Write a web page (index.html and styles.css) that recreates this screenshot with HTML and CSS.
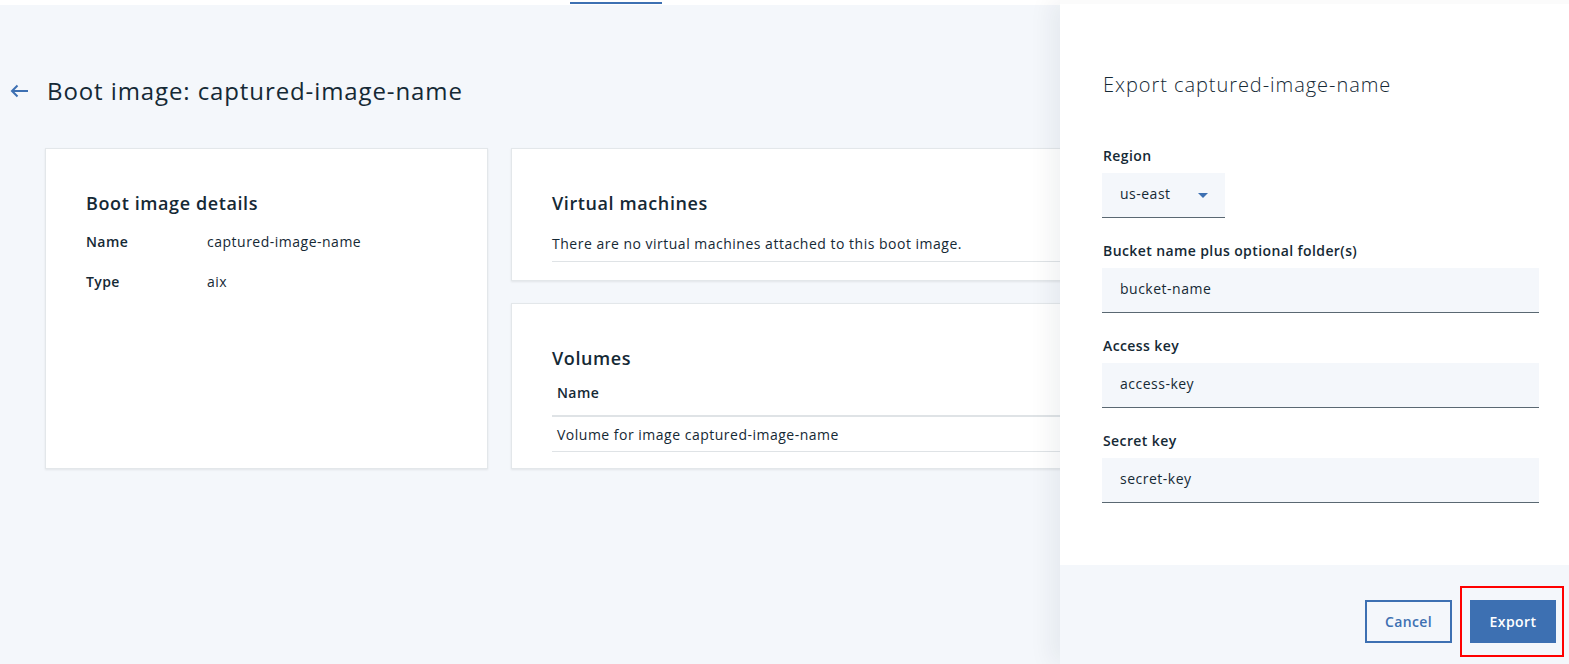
FILE: index.html
```html
<!DOCTYPE html>
<html lang="en">
<head>
<meta charset="utf-8">
<title>Boot image</title>
<link rel="stylesheet" href="styles.css">
</head>
<body>
<div class="topstrip"><span class="tabbar"></span></div>
<main class="page">
  <header class="pagehead">
    <svg class="back" width="20" height="16" viewBox="0 0 20 16" aria-hidden="true">
      <path d="M19 8H3M8.5 2.5L3 8l5.5 5.5" fill="none" stroke="#3d70b2" stroke-width="2"/>
    </svg>
    <h1 class="title">Boot image: captured-image-name</h1>
  </header>
  <section class="cards">
    <div class="card card-details">
      <h2 class="card-title">Boot image details</h2>
      <dl class="props">
        <div class="prop"><dt>Name</dt><dd>captured-image-name</dd></div>
        <div class="prop"><dt>Type</dt><dd>aix</dd></div>
      </dl>
    </div>
    <div class="col">
      <div class="card card-vm">
        <h2 class="card-title">Virtual machines</h2>
        <p class="empty">There are no virtual machines attached to this boot image.</p>
      </div>
      <div class="card card-vol">
        <h2 class="card-title">Volumes</h2>
        <div class="table">
          <div class="th">Name</div>
          <div class="td">Volume for image captured-image-name</div>
        </div>
      </div>
    </div>
  </section>
</main>
<aside class="panel">
  <div class="panel-body">
    <h3 class="panel-title">Export captured-image-name</h3>
    <div class="field">
      <label class="label">Region</label>
      <div class="select">
        <span>us-east</span>
        <svg width="10" height="5" viewBox="0 0 10 5" aria-hidden="true"><path d="M0 0h10L5 5z" fill="#3d70b2"/></svg>
      </div>
    </div>
    <div class="field">
      <label class="label">Bucket name plus optional folder(s)</label>
      <div class="input">bucket-name</div>
    </div>
    <div class="field">
      <label class="label">Access key</label>
      <div class="input">access-key</div>
    </div>
    <div class="field">
      <label class="label">Secret key</label>
      <div class="input">secret-key</div>
    </div>
  </div>
  <footer class="panel-foot">
    <button class="btn btn-secondary">Cancel</button>
    <button class="btn btn-primary">Export</button>
    <span class="highlight"></span>
  </footer>
</aside>
</body>
</html>
```
FILE: styles.css
```css
* { box-sizing: border-box; }
html, body { margin: 0; padding: 0; }
body {
  width: 1569px;
  height: 664px;
  overflow: hidden;
  background: #f4f7fb;
  font-family: "Open Sans", "Noto Sans", sans-serif;
  color: #152935;
  position: relative;
  letter-spacing: 0.5px;
}
.topstrip {
  height: 5px;
  background: #ffffff;
  position: relative;
}
.tabbar {
  position: absolute;
  left: 570px;
  top: 2px;
  width: 92px;
  height: 2px;
  background: #3d70b2;
}
.page {
  padding: 0 45px;
}
.pagehead {
  display: flex;
  align-items: center;
  height: 174px;
  margin-left: -36px;
  padding-bottom: 32px;
  padding-top: 30px;
  gap: 18px;
}
.back { flex: none; }
.title {
  margin: 0;
  font-size: 24px;
  font-weight: 400;
  line-height: 30px;
  color: #152935;
  letter-spacing: 0.9px;
}
.cards {
  display: grid;
  grid-template-columns: 443px 1fr;
  gap: 23px;
  margin-top: -31px;
}
.col {
  display: flex;
  flex-direction: column;
  gap: 22px;
}
.card {
  background: #ffffff;
  border: 1px solid #e3e7ea;
  box-shadow: 0 1px 2px rgba(0,0,0,0.08);
  padding: 0 40px;
}
.card-details { height: 321px; padding-top: 42px; }
.card-vm { height: 133px; padding-top: 42px; }
.card-vol { height: 166px; padding-top: 42px; }
.card-title {
  margin: 0;
  font-size: 18px;
  font-weight: 600;
  line-height: 24px;
  color: #152935;
  letter-spacing: 0.6px;
}
.props { margin: 6px 0 0; }
.prop {
  display: flex;
  height: 40px;
  align-items: center;
  font-size: 14px;
}
.prop dt { width: 121px; font-weight: 600; letter-spacing: 0.4px; }
.prop dd { margin: 0; }
.empty {
  margin: 20px 0 0;
  font-size: 14px;
  line-height: 18px;
  padding-bottom: 8px;
  border-bottom: 1px solid #dfe3e6;
}
.table { margin-top: 6px; font-size: 14px; }
.th {
  font-weight: 600;
  letter-spacing: 0.4px;
  padding: 8px 5px 13px;
  line-height: 18px;
  border-bottom: 2px solid #dfe3e6;
}
.td {
  padding: 0 5px;
  height: 35px;
  display: flex;
  align-items: center;
  border-bottom: 1px solid #dfe3e6;
}
.panel {
  position: absolute;
  top: 0;
  right: 0;
  width: 509px;
  height: 664px;
  background: #ffffff;
  display: flex;
  flex-direction: column;
  box-shadow: -10px 0 22px rgba(21,41,53,0.06);
  border-top: 4px solid #fbfbfb;
}
.panel-body {
  flex: 1;
  padding: 67px 30px 0 43px;
}
.panel-title {
  margin: 0 0 48px;
  font-size: 20px;
  font-weight: 300;
  line-height: 28px;
  color: #152935;
  letter-spacing: 0.95px;
}
.field { margin-bottom: 24px; }
.label {
  display: block;
  font-size: 14px;
  font-weight: 600;
  letter-spacing: 0.4px;
  line-height: 18px;
  margin-bottom: 8px;
}
.select {
  width: 123px;
  height: 45px;
  margin-left: -1px;
  background: #f4f7fb;
  border-bottom: 1px solid #5a6872;
  display: flex;
  align-items: center;
  justify-content: space-between;
  padding: 0 17px 3px 18px;
  font-size: 14px;
}
.select svg { margin-top: 4px; }
.input {
  height: 45px;
  margin-left: -1px;
  background: #f4f7fb;
  border-bottom: 1px solid #5a6872;
  display: flex;
  align-items: center;
  padding: 0 18px 3px;
  font-size: 14px;
}
.panel-foot {
  height: 99px;
  background: #f4f7fb;
  display: flex;
  justify-content: flex-end;
  align-items: flex-start;
  padding: 35px 13px 0 0;
  gap: 18px;
  position: relative;
}
.btn {
  height: 43px;
  font-family: inherit;
  font-size: 14px;
  font-weight: 600;
  letter-spacing: 0.4px;
  border: 2px solid #3d70b2;
  padding: 0;
  cursor: pointer;
}
.btn-secondary { width: 87px; background: transparent; color: #3d70b2; }
.btn-primary { width: 86px; background: #3d70b2; color: #ffffff; }
.highlight {
  position: absolute;
  left: 400px;
  top: 21px;
  width: 104px;
  height: 71px;
  border: 2px solid #ff0000;
}
```
